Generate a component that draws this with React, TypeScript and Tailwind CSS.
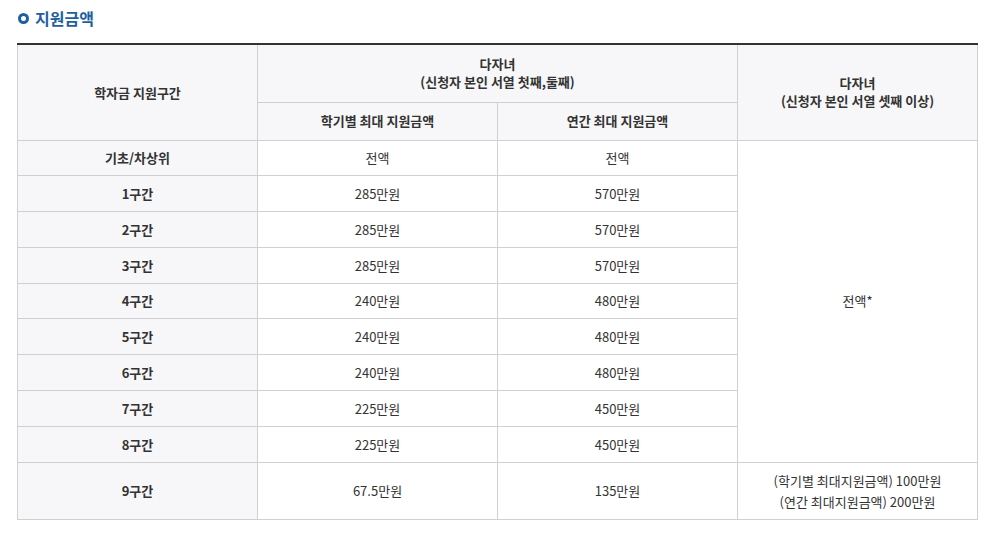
/* Support amount table — 학자금 지원구간별 다자녀 지원금액 */

const rows = [
  { label: "기초/차상위", term: "전액", year: "전액" },
  { label: "1구간", term: "285만원", year: "570만원" },
  { label: "2구간", term: "285만원", year: "570만원" },
  { label: "3구간", term: "285만원", year: "570만원" },
  { label: "4구간", term: "240만원", year: "480만원" },
  { label: "5구간", term: "240만원", year: "480만원" },
  { label: "6구간", term: "240만원", year: "480만원" },
  { label: "7구간", term: "225만원", year: "450만원" },
  { label: "8구간", term: "225만원", year: "450만원" },
];

const font = { fontFamily: "'Noto Sans CJK KR', 'Noto Sans', sans-serif" };

export default function App() {
  return (
    <div className="w-[994px] h-[534px] bg-white px-[17px] pt-[8px]" style={font}>
      {/* Section title */}
      <h3 className="flex items-center gap-[6px] h-[20px] text-[16px] font-bold text-[#1f5fa0] leading-none">
        <span className="w-[11px] h-[11px] rounded-full border-[3px] border-[#1f5fa0] ml-[1px]" />
        지원금액
      </h3>

      <table className="mt-[15px] w-[960px] table-fixed border-collapse border-t-2 border-t-[#333] text-[13px] text-[#333] text-center">
        <colgroup>
          <col className="w-[240px]" />
          <col className="w-[240px]" />
          <col className="w-[240px]" />
          <col className="w-[240px]" />
        </colgroup>
        <thead>
          <tr className="h-[58px]">
            <th rowSpan={2} className="bg-[#f7f7f9] border border-[#d0d0d0] border-t-0 font-bold">
              학자금 지원구간
            </th>
            <th colSpan={2} className="bg-[#f7f7f9] border border-[#d0d0d0] border-t-0 font-bold leading-[18px]">
              다자녀
              <br />
              (신청자 본인 서열 첫째,둘째)
            </th>
            <th rowSpan={2} className="bg-[#f7f7f9] border border-[#d0d0d0] border-t-0 font-bold leading-[18px]">
              다자녀
              <br />
              (신청자 본인 서열 셋째 이상)
            </th>
          </tr>
          <tr className="h-[38px]">
            <th className="bg-[#f7f7f9] border border-[#d0d0d0] font-bold">학기별 최대 지원금액</th>
            <th className="bg-[#f7f7f9] border border-[#d0d0d0] font-bold">연간 최대 지원금액</th>
          </tr>
        </thead>
        <tbody>
          {rows.map((r, i) => (
            <tr key={r.label} className="h-[35.8px]">
              <th className="bg-[#f7f7f9] border border-[#d0d0d0] font-bold">{r.label}</th>
              <td className="border border-[#d0d0d0]">{r.term}</td>
              <td className="border border-[#d0d0d0]">{r.year}</td>
              {i === 0 && (
                <td rowSpan={rows.length} className="border border-[#d0d0d0]">
                  전액*
                </td>
              )}
            </tr>
          ))}
          <tr className="h-[57px]">
            <th className="bg-[#f7f7f9] border border-[#d0d0d0] font-bold">9구간</th>
            <td className="border border-[#d0d0d0]">67.5만원</td>
            <td className="border border-[#d0d0d0]">135만원</td>
            <td className="border border-[#d0d0d0] leading-[21px]">
              (학기별 최대지원금액) 100만원
              <br />
              (연간 최대지원금액) 200만원
            </td>
          </tr>
        </tbody>
      </table>
    </div>
  );
}
